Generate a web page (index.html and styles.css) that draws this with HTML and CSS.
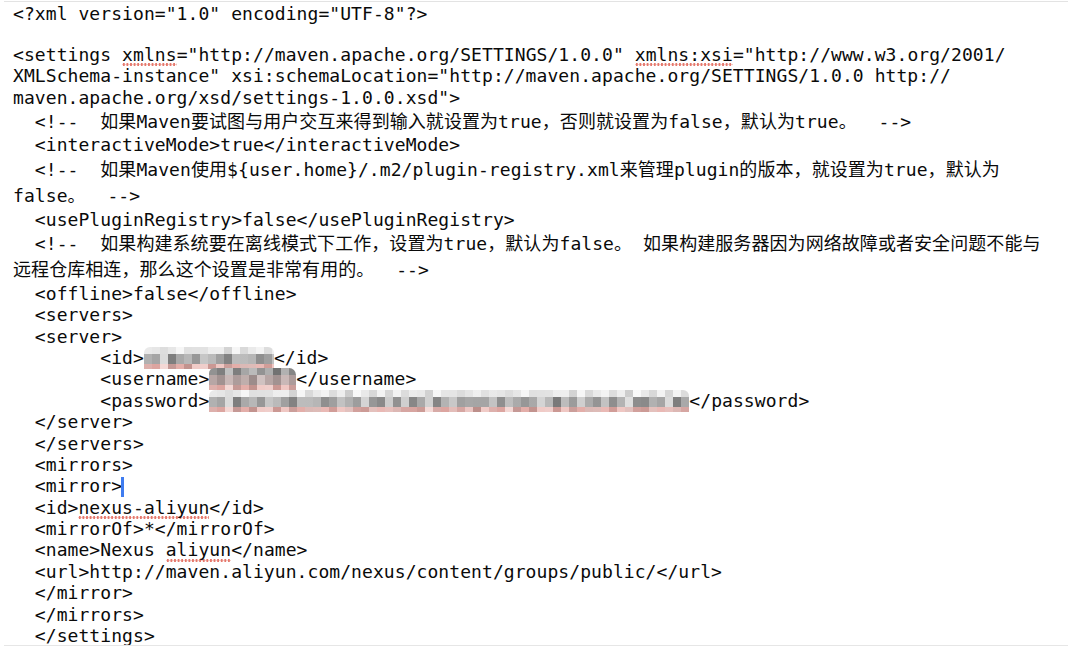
FILE: index.html
```html
<!DOCTYPE html>
<html lang="zh-CN">
<head>
<meta charset="UTF-8">
<title>settings.xml</title>
<link rel="stylesheet" href="styles.css">
</head>
<body>
<div class="editor">
  <div class="ln">&lt;?xml version="1.0" encoding="UTF-8"?&gt;</div>
  <div class="ln blank"></div>
  <div class="ln">&lt;settings <span class="sp">xmlns</span>="http://maven.apache.org/SETTINGS/1.0.0" <span class="sp">xmlns:xsi</span>="http://www.w3.org/2001/</div>
  <div class="ln">XMLSchema-instance" xsi:schemaLocation="http://maven.apache.org/SETTINGS/1.0.0 http://</div>
  <div class="ln">maven.apache.org/xsd/settings-1.0.0.xsd"&gt;</div>
  <div class="ln cj">  &lt;!--  如果Maven要试图与用户交互来得到输入就设置为true，否则就设置为false，默认为true。  --&gt;</div>
  <div class="ln">  &lt;interactiveMode&gt;true&lt;/interactiveMode&gt;</div>
  <div class="ln cj">  &lt;!--  如果Maven使用${user.home}/.m2/plugin-registry.xml来管理plugin的版本，就设置为true，默认为</div>
  <div class="ln cj">false。  --&gt;</div>
  <div class="ln">  &lt;usePluginRegistry&gt;false&lt;/usePluginRegistry&gt;</div>
  <div class="ln cj">  &lt;!--  如果构建系统要在离线模式下工作，设置为true，默认为false。 如果构建服务器因为网络故障或者安全问题不能与</div>
  <div class="ln cj">远程仓库相连，那么这个设置是非常有用的。  --&gt;</div>
  <div class="ln">  &lt;offline&gt;false&lt;/offline&gt;</div>
  <div class="ln">  &lt;servers&gt;</div>
  <div class="ln">  &lt;server&gt;</div>
  <div class="ln">        &lt;id&gt;<span class="mz mz-id"><span class="t"></span><span class="m"></span><span class="b"></span></span>&lt;/id&gt;</div>
  <div class="ln">        &lt;username&gt;<span class="mz mz-user"><span class="t"></span><span class="m"></span><span class="b"></span></span>&lt;/username&gt;</div>
  <div class="ln">        &lt;password&gt;<span class="mz mz-pass"><span class="t"></span><span class="m"></span><span class="b"></span></span>&lt;/password&gt;</div>
  <div class="ln">  &lt;/server&gt;</div>
  <div class="ln">  &lt;/servers&gt;</div>
  <div class="ln">  &lt;mirrors&gt;</div>
  <div class="ln">  &lt;mirror&gt;<span class="caret"></span></div>
  <div class="ln">  &lt;id&gt;<span class="sp">nexus-aliyun</span>&lt;/id&gt;</div>
  <div class="ln">  &lt;mirrorOf&gt;*&lt;/mirrorOf&gt;</div>
  <div class="ln">  &lt;name&gt;Nexus <span class="sp">aliyun</span>&lt;/name&gt;</div>
  <div class="ln">  &lt;url&gt;http://maven.aliyun.com/nexus/content/groups/public/&lt;/url&gt;</div>
  <div class="ln">  &lt;/mirror&gt;</div>
  <div class="ln">  &lt;/mirrors&gt;</div>
  <div class="ln">  &lt;/settings&gt;</div>
</div>
</body>
</html>
```
FILE: styles.css
```css
html, body {
  margin: 0;
  background: #ffffff;
}

body {
  font-family: "DejaVu Sans Mono", "Noto Sans CJK SC", monospace;
  font-size: 18px;
  letter-spacing: 0.07px;
  color: #0a0a0a;
}

.editor {
  box-sizing: border-box;
  margin: 1px 8px 0 4px;
  height: 645px;
  padding: 1px 0 0 9px;
  border-top: 1px solid #e3e3e3;
  border-bottom: 1px solid #e6e6e6;
  overflow: hidden;
}

.ln {
  height: 21.4px;
  line-height: 21.4px;
  white-space: pre;
}

.ln.blank {
  height: 19.5px;
}

.ln.cj {
  box-sizing: border-box;
  height: 26.4px;
  padding-top: 3px;
}

/* spell-check dotted underline */
.sp {
  padding-bottom: 1.5px;
  background-image: radial-gradient(circle, #e5786c 0 1.1px, rgba(229, 120, 108, 0) 1.5px);
  background-size: 3.6px 3px;
  background-repeat: repeat-x;
  background-position: 0 100%;
}

/* text cursor */
.caret {
  display: inline-block;
  width: 2.5px;
  height: 20px;
  vertical-align: -5px;
  background: #3f7cf0;
  margin-left: -1px;
}

/* pixelated (redacted) values */
.mz {
  display: inline-block;
  vertical-align: -5px;
  height: 22px;
}

.mz > span {
  display: block;
}

.mz .t { height: 7px; }
.mz .m { height: 10px; }
.mz .b { height: 5px; }

.mz-id { width: 130px; }
.mz-user { width: 87px; }
.mz-pass { width: 480px; }

.mz-id .t,
.mz-pass .t {
  background:
    repeating-linear-gradient(90deg, rgba(0,0,0,0.04) 0 8px, rgba(255,255,255,0) 8px 16px, rgba(0,0,0,0.07) 16px 24px, rgba(255,255,255,0.3) 24px 32px, rgba(255,255,255,0) 32px 40px),
    repeating-linear-gradient(90deg, #f3f3f3 0 8px, #e6e6e6 8px 16px, #eeeeee 16px 24px, #dcdcdc 24px 32px, #f6f6f6 32px 40px, #e9e9e9 40px 48px, #e1e1e1 48px 56px);
  border-radius: 6px 6px 0 0;
}

.mz-id .m,
.mz-pass .m {
  background:
    repeating-linear-gradient(90deg, rgba(0,0,0,0.06) 0 8px, rgba(255,255,255,0) 8px 16px, rgba(255,255,255,0.25) 16px 24px, rgba(0,0,0,0.12) 24px 32px, rgba(255,255,255,0) 32px 40px),
    repeating-linear-gradient(90deg, #bcbcbc 0 8px, #a5a5a5 8px 16px, #cfcfcf 16px 24px, #8f8f8f 24px 32px, #a9a9a9 32px 40px, #c2c2c2 40px 48px, #979797 48px 56px, #b3b3b3 56px 64px, #d4d4d4 64px 72px, #a0a0a0 72px 80px, #8a8a8a 80px 88px);
}

.mz .b {
  background:
    repeating-linear-gradient(90deg, rgba(0,0,0,0.05) 0 8px, rgba(255,255,255,0) 8px 16px, rgba(255,255,255,0.3) 16px 24px, rgba(0,0,0,0.08) 24px 32px, rgba(255,255,255,0) 32px 40px),
    repeating-linear-gradient(90deg, #e9b9b5 0 8px, #dca5a0 8px 16px, #efc7c3 16px 24px, #d6a6a2 24px 32px, #e3aea9 32px 40px, #cc9b96 40px 48px, #f0cbc7 48px 56px);
}

.mz-user .t {
  background:
    repeating-linear-gradient(90deg, rgba(0,0,0,0.05) 0 8px, rgba(255,255,255,0) 8px 16px, rgba(255,255,255,0.2) 16px 24px, rgba(0,0,0,0.1) 24px 32px, rgba(255,255,255,0) 32px 40px),
    repeating-linear-gradient(90deg, #9a9a9a 0 8px, #7f7f7f 8px 16px, #b1b1b1 16px 24px, #8c8c8c 24px 32px, #a6a6a6 32px 40px, #c4c4c4 40px 48px, #939393 48px 56px);
  border-radius: 6px 8px 0 0;
}

.mz-user .m {
  background:
    repeating-linear-gradient(90deg, #b7a6a5 0 8px, #a29291 8px 16px, #c9b8b7 16px 24px, #ad9c9b 24px 32px, #bfaeac 32px 40px, #9c8c8b 40px 48px, #d0c2c1 48px 56px);
}
```
